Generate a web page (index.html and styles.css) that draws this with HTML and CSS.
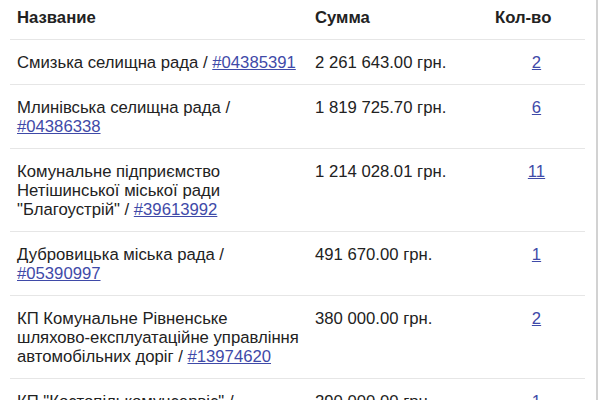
FILE: index.html
```html
<!DOCTYPE html>
<html lang="uk">
<head>
<meta charset="utf-8">
<title>Розпорядники</title>
<link rel="stylesheet" href="styles.css">
</head>
<body>
<div class="panel">
  <table class="grid">
    <thead>
      <tr>
        <th class="c-name">Название</th>
        <th class="c-sum">Сумма</th>
        <th class="c-qty">Кол-во</th>
      </tr>
    </thead>
    <tbody>
      <tr>
        <td class="c-name">Смизька селищна рада / <a href="#">#04385391</a></td>
        <td class="c-sum">2 261 643.00 грн.</td>
        <td class="c-qty"><a href="#">2</a></td>
      </tr>
      <tr>
        <td class="c-name">Млинівська селищна рада / <a href="#">#04386338</a></td>
        <td class="c-sum">1 819 725.70 грн.</td>
        <td class="c-qty"><a href="#">6</a></td>
      </tr>
      <tr>
        <td class="c-name">Комунальне підприємство Нетішинської міської ради "Благоустрій" / <a href="#">#39613992</a></td>
        <td class="c-sum">1 214 028.01 грн.</td>
        <td class="c-qty"><a href="#">11</a></td>
      </tr>
      <tr>
        <td class="c-name">Дубровицька міська рада / <a href="#">#05390997</a></td>
        <td class="c-sum">491 670.00 грн.</td>
        <td class="c-qty"><a href="#">1</a></td>
      </tr>
      <tr>
        <td class="c-name">КП Комунальне Рівненське шляхово-експлуатаційне управління автомобільних доріг / <a href="#">#13974620</a></td>
        <td class="c-sum">380 000.00 грн.</td>
        <td class="c-qty"><a href="#">2</a></td>
      </tr>
      <tr>
        <td class="c-name">КП "Костопількомунсервіс" / <a href="#">#00000000</a></td>
        <td class="c-sum">290 000.00 грн.</td>
        <td class="c-qty"><a href="#">1</a></td>
      </tr>
    </tbody>
  </table>
</div>
</body>
</html>
```

FILE: styles.css
```css
html, body {
  margin: 0;
  padding: 0;
  background: #ffffff;
}

.panel {
  box-sizing: border-box;
  width: 598px;
  height: 400px;
  overflow: hidden;
  padding-left: 10px;
  border-right: 2px solid #d2d2d2;
  font-family: "Liberation Sans", Arial, sans-serif;
  font-size: 16.7px;
  line-height: 19px;
  color: #222222;
}

.grid {
  border-collapse: collapse;
  width: 575px;
  table-layout: fixed;
}

.grid th,
.grid td {
  text-align: left;
  vertical-align: top;
  padding: 13px 7px 12px 7px;
}

.grid th {
  font-weight: bold;
  padding-top: 8px;
  padding-bottom: 12px;
}

.grid tbody td {
  border-top: 1px solid #e6e6e6;
}

.c-name { width: 284px; }
.c-sum { width: 166px; }
.c-qty { width: 83px; }

.grid td.c-qty {
  text-align: center;
}

.grid a {
  color: #3f4aa8;
  text-decoration: underline;
}
```
